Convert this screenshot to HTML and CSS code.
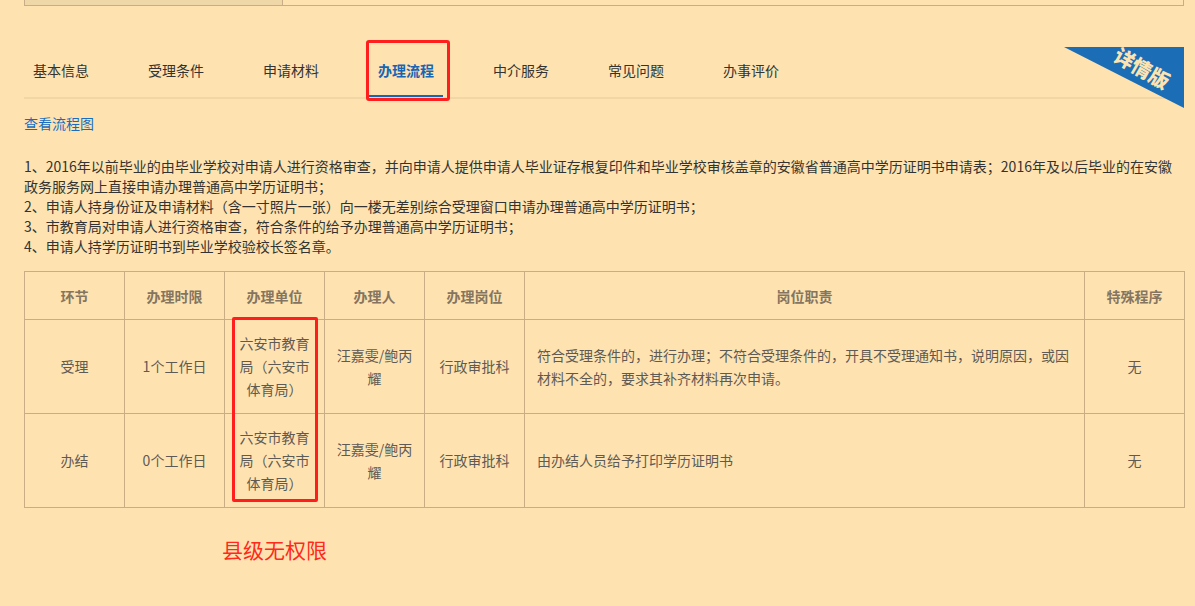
FILE: index.html
```html
<!DOCTYPE html>
<html lang="zh-CN">
<head>
<meta charset="utf-8">
<title>办理流程</title>
<link rel="stylesheet" href="styles.css">
</head>
<body>
<div class="page">
  <div class="topbar">
    <div class="topbar-left"></div>
    <div class="topbar-right"></div>
  </div>

  <div class="tabbar">
    <div class="tabs">
      <div class="tab">基本信息</div>
      <div class="tab">受理条件</div>
      <div class="tab">申请材料</div>
      <div class="tab active">办理流程</div>
      <div class="tab">中介服务</div>
      <div class="tab">常见问题</div>
      <div class="tab">办事评价</div>
    </div>
    <div class="mark-tab"></div>
    <div class="ribbon"></div>
    <span class="ribbon-text">详情版</span>
  </div>

  <a class="flow-link" href="#">查看流程图</a>

  <div class="steps">
    <p>1、2016年以前毕业的由毕业学校对申请人进行资格审查，并向申请人提供申请人毕业证存根复印件和毕业学校审核盖章的安徽省普通高中学历证明书申请表；2016年及以后毕业的在安徽政务服务网上直接申请办理普通高中学历证明书；</p>
    <p>2、申请人持身份证及申请材料（含一寸照片一张）向一楼无差别综合受理窗口申请办理普通高中学历证明书；</p>
    <p>3、市教育局对申请人进行资格审查，符合条件的给予办理普通高中学历证明书；</p>
    <p>4、申请人持学历证明书到毕业学校验校长签名章。</p>
  </div>

  <div class="table-wrap">
    <table class="flow">
      <colgroup>
        <col class="c-narrow"><col class="c-narrow"><col class="c-narrow"><col class="c-narrow"><col class="c-narrow"><col class="c-wide"><col class="c-narrow">
      </colgroup>
      <thead>
        <tr>
          <th>环节</th><th>办理时限</th><th>办理单位</th><th>办理人</th><th>办理岗位</th><th>岗位职责</th><th>特殊程序</th>
        </tr>
      </thead>
      <tbody>
        <tr>
          <td>受理</td>
          <td>1个工作日</td>
          <td>六安市教育局（六安市体育局）</td>
          <td>汪嘉雯/鲍丙耀</td>
          <td>行政审批科</td>
          <td class="duty">符合受理条件的，进行办理；不符合受理条件的，开具不受理通知书，说明原因，或因材料不全的，要求其补齐材料再次申请。</td>
          <td>无</td>
        </tr>
        <tr>
          <td>办结</td>
          <td>0个工作日</td>
          <td>六安市教育局（六安市体育局）</td>
          <td>汪嘉雯/鲍丙耀</td>
          <td>行政审批科</td>
          <td class="duty">由办结人员给予打印学历证明书</td>
          <td>无</td>
        </tr>
      </tbody>
    </table>
    <div class="mark-col"></div>
  </div>

  <div class="note">县级无权限</div>
</div>
</body>
</html>
```

FILE: styles.css
```css
html, body {
  margin: 0;
  padding: 0;
  background: #fee3b0;
}

body {
  font-family: "Noto Sans CJK SC", "Noto Sans", sans-serif;
  color: #333;
  font-size: 14px;
}

.page {
  padding: 0 11px 0 24px;
}

/* top strip */
.topbar {
  display: flex;
  height: 5px;
  border: 1px solid #c7ae88;
  border-top: none;
}
.topbar-left {
  width: 257px;
  background: #f0d7a7;
  border-right: 1px solid #c7ae88;
}
.topbar-right {
  flex: 1;
}

/* tabs */
.tabbar {
  position: relative;
  margin-top: 41px;
  border-bottom: 2px solid #f1d6a6;
}
.tabs {
  display: flex;
  gap: 41px;
}
.tab {
  width: 56px;
  padding: 13px 9px 15px;
  line-height: 20px;
  font-size: 14px;
  color: #333;
  white-space: nowrap;
  border-bottom: 2px solid transparent;
}
.tab.active {
  color: #1766b5;
  font-weight: bold;
  border-bottom-color: #1766b5;
}
.mark-tab {
  position: absolute;
  left: 342px;
  top: -7px;
  width: 78px;
  height: 55px;
  border: 3px solid #ff1e1e;
  border-radius: 3px;
}
.ribbon {
  position: absolute;
  right: 0;
  top: 0;
  width: 120px;
  height: 61px;
  background: #1b6db6;
  clip-path: polygon(0 0, 100% 0, 100% 100%);
}
.ribbon-text {
  position: absolute;
  left: 1086px;
  top: 10px;
  width: 64px;
  text-align: center;
  font-size: 20px;
  font-weight: 900;
  line-height: 22px;
  color: #fde3b0;
  transform: rotate(30deg);
  transform-origin: 50% 50%;
  white-space: nowrap;
}

/* link */
.flow-link {
  display: block;
  margin-top: 14px;
  font-size: 14px;
  line-height: 20px;
  color: #1a6cc0;
  text-decoration: none;
}

/* steps */
.steps {
  margin-top: 23px;
}
.steps p {
  margin: 0;
  font-size: 14px;
  line-height: 20px;
  color: #333;
}

/* table */
.table-wrap {
  position: relative;
  margin-top: 15px;
}
.flow {
  width: 100%;
  border-collapse: collapse;
  table-layout: fixed;
  font-size: 14px;
}
.c-narrow { width: 100px; }
.c-wide { width: 560px; }
.flow th,
.flow td {
  border: 1px solid #c8ad85;
  text-align: center;
  vertical-align: middle;
}
.flow th {
  height: 47px;
  padding: 0 6px;
  color: #857560;
  font-weight: bold;
  line-height: 20px;
}
.flow td {
  height: 69px;
  padding: 12px 10px;
  color: #5e5a55;
  line-height: 23px;
}
.flow td.duty {
  text-align: left;
  padding: 12px 12px;
}
.mark-col {
  position: absolute;
  left: 208px;
  top: 46px;
  width: 80px;
  height: 179px;
  border: 3px solid #ff1e1e;
  border-radius: 2px;
}

/* note */
.note {
  margin-top: 27px;
  padding-left: 198px;
  font-size: 21px;
  line-height: 28px;
  color: #ff2a1c;
}
```
